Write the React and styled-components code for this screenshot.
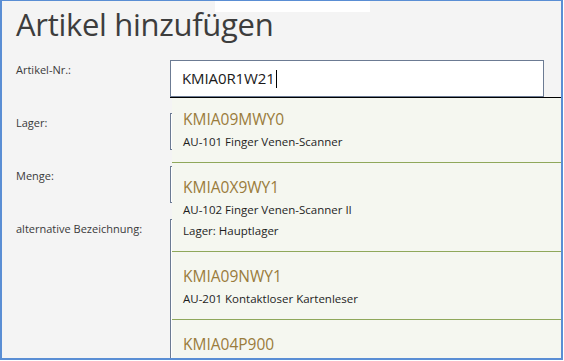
import React from "react";
import styled, { createGlobalStyle } from "styled-components";

const GlobalStyle = createGlobalStyle`
  html, body {
    margin: 0;
    padding: 0;
    background: #ffffff;
  }
  * {
    box-sizing: border-box;
  }
`;

const Frame = styled.div`
  position: relative;
  width: 563px;
  height: 360px;
  overflow: hidden;
  background: #f4f4f4;
  border: 2px solid #5a8ed4;
  border-top-width: 1px;
  font-family: "Open Sans", "Noto Sans", sans-serif;
  color: #333333;
`;

const TopStrip = styled.div`
  position: absolute;
  top: 0;
  left: 213px;
  width: 155px;
  height: 11px;
  background: #ffffff;
`;

const Title = styled.h1`
  margin: 0;
  padding: 5px 0 0 14px;
  font-size: 31px;
  font-weight: 400;
  line-height: 36px;
  letter-spacing: -0.3px;
  color: #3d3d3d;
`;

const Form = styled.div`
  display: grid;
  grid-template-columns: 154px 374px;
  row-gap: 16px;
  padding: 18px 0 0 14px;
`;

const Label = styled.label`
  font-size: 11px;
  line-height: 15px;
  padding-top: 2px;
  color: #3a3a3a;
`;

const Field = styled.div`
  height: ${(p) => p.h || 37}px;
  background: #ffffff;
  border: 1px solid #6c7b93;
  padding-left: 11px;
  font-size: 15px;
  letter-spacing: -0.1px;
  line-height: 35px;
  color: #1a1a1a;
  white-space: nowrap;
`;

const Caret = styled.span`
  display: inline-block;
  width: 1px;
  height: 18px;
  margin-left: 1px;
  vertical-align: -4px;
  background: #000000;
`;

const Dropdown = styled.div`
  position: absolute;
  left: 168px;
  top: 96px;
  width: 395px;
  height: 270px;
  border-top: 1px solid #000000;
  overflow: hidden;
`;

const List = styled.ul`
  list-style: none;
  margin: -3px 0 0 2px;
  padding: 0;
  width: 389px;
  background: #f5f7f0;
`;

const Item = styled.li`
  padding: 13px 0 10px 11px;
  border-bottom: 1px solid #8fa85b;
`;

const Code = styled.div`
  font-size: 15.5px;
  line-height: 23px;
  color: #9a7c3c;
`;

const Line = styled.div`
  font-size: 11.5px;
  line-height: 21px;
  color: #1e1e1e;
`;

const items = [
  { code: "KMIA09MWY0", lines: ["AU-101 Finger Venen-Scanner"] },
  {
    code: "KMIA0X9WY1",
    lines: ["AU-102 Finger Venen-Scanner II", "Lager: Hauptlager"],
  },
  { code: "KMIA09NWY1", lines: ["AU-201 Kontaktloser Kartenleser"] },
  { code: "KMIA04P900", lines: [] },
];

export default function App() {
  return (
    <>
      <GlobalStyle />
      <Frame>
        <TopStrip />
        <Title>Artikel hinzufügen</Title>
        <Form>
          <Label>Artikel-Nr.:</Label>
          <Field>
            KMIA0R1W21
            <Caret />
          </Field>
          <Label>Lager:</Label>
          <Field />
          <Label>Menge:</Label>
          <Field />
          <Label>alternative Bezeichnung:</Label>
          <Field h={160} />
        </Form>
        <Dropdown>
          <List>
            {items.map((it) => (
              <Item key={it.code}>
                <Code>{it.code}</Code>
                {it.lines.map((l) => (
                  <Line key={l}>{l}</Line>
                ))}
              </Item>
            ))}
          </List>
        </Dropdown>
      </Frame>
    </>
  );
}
